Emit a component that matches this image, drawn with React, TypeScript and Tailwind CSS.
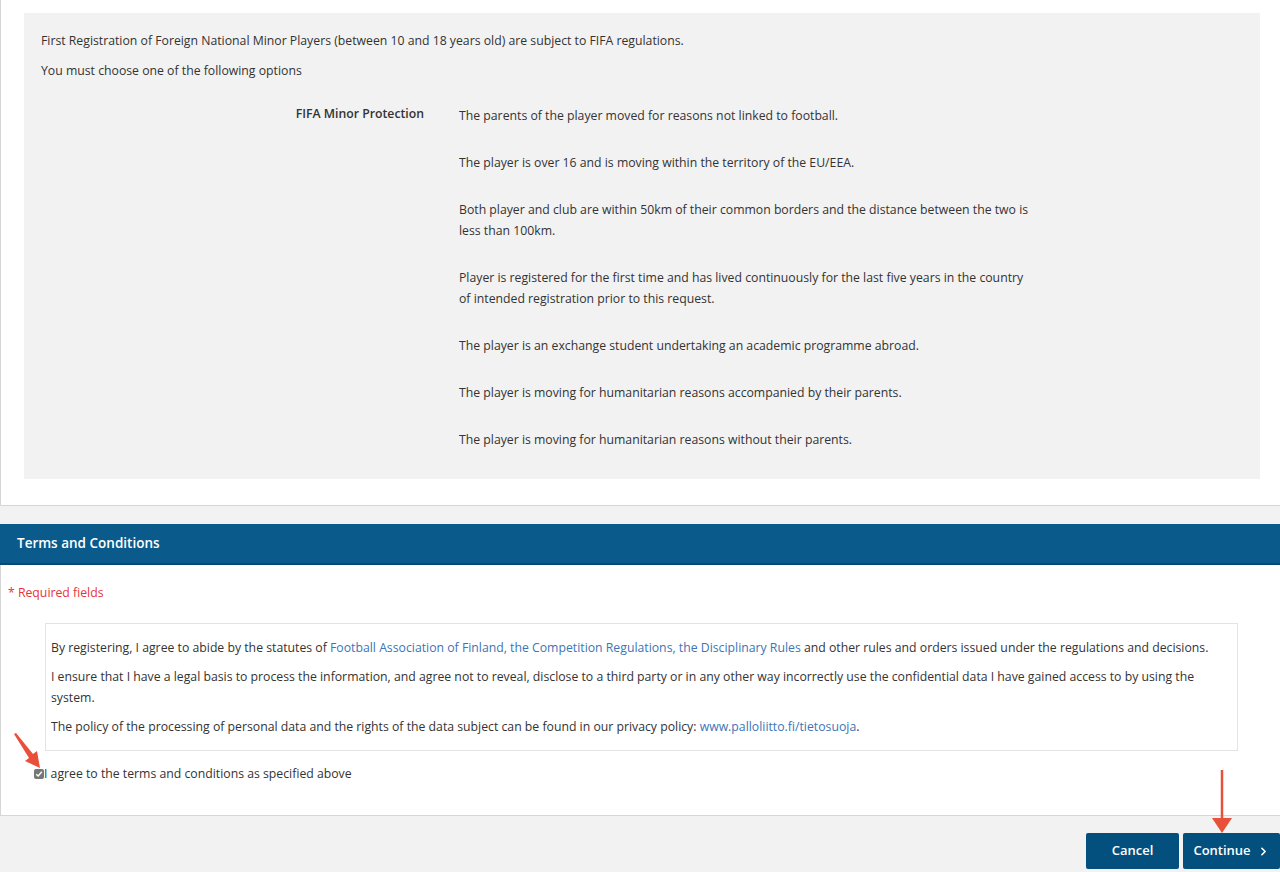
import { ChevronRight } from 'lucide-react';

const options = [
  'The parents of the player moved for reasons not linked to football.',
  'The player is over 16 and is moving within the territory of the EU/EEA.',
  'Both player and club are within 50km of their common borders and the distance between the two is less than 100km.',
  'Player is registered for the first time and has lived continuously for the last five years in the country of intended registration prior to this request.',
  'The player is an exchange student undertaking an academic programme abroad.',
  'The player is moving for humanitarian reasons accompanied by their parents.',
  'The player is moving for humanitarian reasons without their parents.',
];

function Arrows() {
  return (
    <svg className="pointer-events-none absolute left-0 top-0" width="1280" height="872">
      <polygon points="14,734 16,733 33,754 37,751 40,768 25,761 29,758" fill="#e8503a" />
      <line x1="1222" y1="770" x2="1222" y2="820" stroke="#e8503a" strokeWidth="2.5" />
      <polygon points="1212,818 1232,818 1222,833" fill="#e8503a" />
    </svg>
  );
}

export default function App() {
  return (
    <div
      className="relative min-h-[872px] w-[1280px] bg-[#f2f2f2] text-[12.25px] text-[#333]"
      style={{ fontFamily: '"Open Sans", "Noto Sans", sans-serif' }}
    >
      <div className="border-b border-l border-[#d6d6d6] bg-white pb-[26px] pl-[23px] pr-[20px] pt-[13px]">
        <div className="bg-[#f2f2f2] pb-[29px] pl-[17px] pr-[17px] pt-[19px]">
          <p className="leading-[18px]">
            First Registration of Foreign National Minor Players (between 10 and 18 years old) are subject to FIFA regulations.
          </p>
          <p className="mt-[12px] leading-[18px]">You must choose one of the following options</p>
          <div className="mt-[24px] flex">
            <div className="w-[383px] pt-[1px] text-right font-semibold leading-[18px]">FIFA Minor Protection</div>
            <div className="ml-[35px] flex w-[575px] flex-col gap-[26px] pt-[1px]">
              {options.map((o) => (
                <p key={o} className="leading-[21px]">
                  {o}
                </p>
              ))}
            </div>
          </div>
        </div>
      </div>

      <div className="mt-[18px] border-b-2 border-[#064a73] bg-[#0a5a8b] px-[17px] py-[10px]">
        <h2 className="text-[13.5px] font-semibold leading-[19px] text-white">Terms and Conditions</h2>
      </div>

      <div className="border-b border-l border-[#d6d6d6] bg-white pb-[32px] pt-[19px]">
        <p className="pl-[7px] leading-[18px] text-[#e8323a]">* Required fields</p>
        <div className="ml-[44px] mr-[42px] mt-[21px] border border-[#e3e3e3] pb-[13px] pl-[5px] pr-[20px] pt-[13px]">
          <p className="leading-[21px]">
            By registering, I agree to abide by the statutes of{' '}
            <a className="text-[#3d74b6]">Football Association of Finland, the Competition Regulations, the Disciplinary Rules</a>{' '}
            and other rules and orders issued under the regulations and decisions.
          </p>
          <p className="mt-[8px] leading-[21px]">
            I ensure that I have a legal basis to process the information, and agree not to reveal, disclose to a third party or in any other way incorrectly use the confidential data I have gained access to by using the system.
          </p>
          <p className="mt-[8px] leading-[21px]">
            The policy of the processing of personal data and the rights of the data subject can be found in our privacy policy:{' '}
            <a className="text-[#3d74b6]">www.palloliitto.fi/tietosuoja</a>.
          </p>
        </div>
        <label className="ml-[33px] mt-[14px] flex items-center leading-[18px]">
          <span className="flex h-[10px] w-[10px] items-center justify-center rounded-[2px] bg-[#777]">
            <svg width="8" height="8" viewBox="0 0 8 8">
              <path d="M1.2 4.2 L3.2 6 L6.8 1.8" stroke="white" strokeWidth="1.4" fill="none" />
            </svg>
          </span>
          <span>I agree to the terms and conditions as specified above</span>
        </label>
      </div>

      <div className="flex justify-end gap-[4px] pt-[17px]">
        <button className="h-[36px] w-[93px] rounded-[2px] bg-[#03507f] text-[13px] font-semibold text-white">Cancel</button>
        <button className="flex h-[36px] w-[97px] items-center justify-center gap-[6px] rounded-[2px] bg-[#03507f] text-[13px] font-semibold text-white">
          Continue
          <ChevronRight size={13} strokeWidth={3} />
        </button>
      </div>

      <Arrows />
    </div>
  );
}
